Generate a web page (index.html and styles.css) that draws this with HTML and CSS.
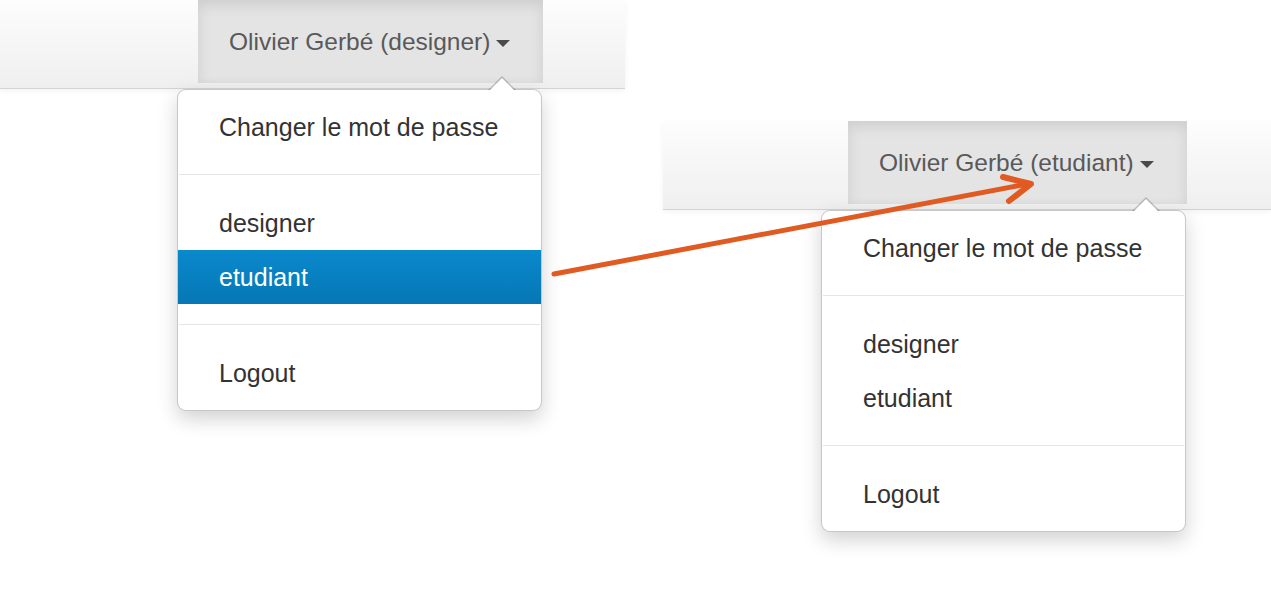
FILE: index.html
```html
<!DOCTYPE html>
<html lang="fr">
<head>
<meta charset="utf-8">
<title>Changement de rôle</title>
<link rel="stylesheet" href="styles.css">
</head>
<body>
<div class="stage">
  <section class="shot shot-left">
    <div class="navbar">
      <div class="nav-item">
        <span class="nav-label">Olivier Gerbé (designer)</span><span class="caret"></span>
        <ul class="menu">
          <li class="menu-item">Changer le mot de passe</li>
          <li class="divider"></li>
          <li class="menu-item">designer</li>
          <li class="menu-item active">etudiant</li>
          <li class="divider"></li>
          <li class="menu-item">Logout</li>
        </ul>
      </div>
    </div>
  </section>

  <section class="shot shot-right">
    <div class="navbar">
      <div class="nav-item">
        <span class="nav-label">Olivier Gerbé (etudiant)</span><span class="caret"></span>
        <ul class="menu">
          <li class="menu-item">Changer le mot de passe</li>
          <li class="divider"></li>
          <li class="menu-item">designer</li>
          <li class="menu-item">etudiant</li>
          <li class="divider"></li>
          <li class="menu-item">Logout</li>
        </ul>
      </div>
    </div>
  </section>

  <svg class="arrow" width="1271" height="615" viewBox="0 0 1271 615" aria-hidden="true">
    <g fill="none" stroke="#e05a22" stroke-linecap="round" stroke-linejoin="round">
      <line x1="554" y1="274" x2="1027" y2="184" stroke-width="5"/>
      <polyline points="1003,177 1031,184 1009,201" stroke-width="6"/>
    </g>
  </svg>
</div>
</body>
</html>
```

FILE: styles.css
```css
html, body {
  margin: 0;
  padding: 0;
  background: #ffffff;
}

.stage {
  position: relative;
  display: flex;
  align-items: flex-start;
  width: 1271px;
  height: 615px;
  overflow: hidden;
  font-family: "Liberation Sans", Arial, Helvetica, sans-serif;
}

.shot-left {
  width: 625px;
}

.shot-right {
  width: 608px;
  margin-left: 38px;
  margin-top: 121px;
}

.navbar {
  height: 88px;
  border-bottom: 1px solid #d4d4d4;
  background: linear-gradient(#fdfdfd, #efefef);
  box-shadow: 0 2px 6px rgba(0, 0, 0, 0.05);
  display: flex;
}

.shot-left .nav-item {
  margin-left: 198px;
  width: 345px;
}

.shot-right .nav-item {
  margin-left: 185px;
  width: 339px;
}

.nav-item {
  position: relative;
  box-sizing: border-box;
  height: 83px;
  padding-left: 31px;
  background: #e4e4e4;
  box-shadow: inset 0 5px 14px rgba(0, 0, 0, 0.1);
  color: #595959;
  font-size: 24.5px;
  line-height: 83px;
  white-space: nowrap;
}

.caret {
  display: inline-block;
  width: 0;
  height: 0;
  margin-left: 6px;
  vertical-align: 3px;
  border-top: 7px solid #4a4a4a;
  border-left: 7px solid transparent;
  border-right: 7px solid transparent;
}

.menu {
  position: absolute;
  top: 89px;
  right: 1px;
  width: 365px;
  box-sizing: border-box;
  margin: 0;
  padding: 10px 0;
  list-style: none;
  background: #ffffff;
  border: 1px solid rgba(0, 0, 0, 0.22);
  border-radius: 9px;
  box-shadow: 0 8px 20px rgba(0, 0, 0, 0.18);
  line-height: normal;
}

.menu::before,
.menu::after {
  content: "";
  position: absolute;
  width: 0;
  height: 0;
  border-left-style: solid;
  border-right-style: solid;
  border-bottom-style: solid;
  border-left-color: transparent;
  border-right-color: transparent;
}

.menu::before {
  top: -14px;
  right: 25px;
  border-width: 0 14px 14px 14px;
  border-bottom-color: rgba(0, 0, 0, 0.2);
}

.menu::after {
  top: -12px;
  right: 27px;
  border-width: 0 12px 12px 12px;
  border-bottom-color: #ffffff;
}

.menu-item {
  height: 54px;
  padding-left: 41px;
  font-size: 25px;
  line-height: 54px;
  color: #333333;
}

.menu-item.active {
  color: #ffffff;
  background: linear-gradient(#0a89cc, #0677b5);
}

.divider {
  height: 1px;
  margin: 20px 1px 20px;
  background: #e5e5e5;
  border-bottom: 1px solid #ffffff;
}

.arrow {
  position: absolute;
  left: 0;
  top: 0;
  pointer-events: none;
}
```
